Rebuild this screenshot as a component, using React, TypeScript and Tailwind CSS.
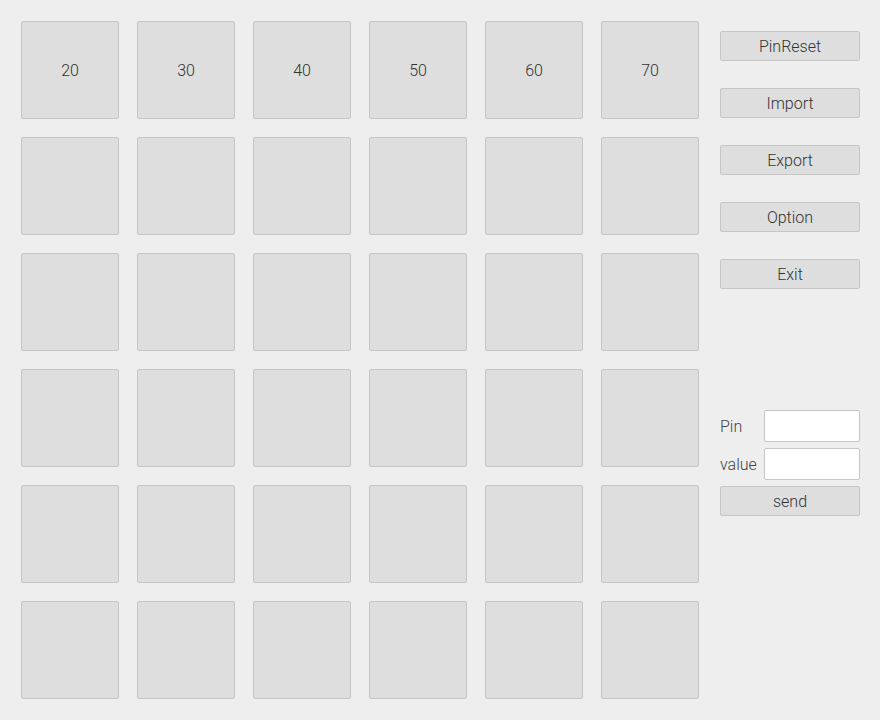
const labels = ["20", "30", "40", "50", "60", "70"];

function Tile({ label }: { label?: string }) {
  return (
    <div className="flex h-[98px] w-[98px] items-center justify-center rounded-[2px] border border-[#c6c6c6] bg-[#dedede] pt-[2px] text-[16px] font-light text-[#333333]">
      {label}
    </div>
  );
}

function Button({ children }: { children: string }) {
  return (
    <button className="flex h-[30px] w-[140px] items-center justify-center rounded-[2px] border border-[#c6c6c6] bg-[#dedede] pt-[2px] text-[16px] font-light text-[#333333]">
      {children}
    </button>
  );
}

export default function App() {
  const tiles = Array.from({ length: 36 }, (_, i) => (i < 6 ? labels[i] : undefined));

  return (
    <div
      className="flex h-[720px] w-[880px] bg-[#eeeeee] pl-[21px] pt-[21px]"
      style={{ fontFamily: "Roboto, 'Noto Sans', sans-serif" }}
    >
      <div className="grid grid-cols-[repeat(6,98px)] gap-[18px] self-start">
        {tiles.map((label, i) => (
          <Tile key={i} label={label} />
        ))}
      </div>

      <div className="ml-[21px] flex w-[140px] flex-col pt-[10px]">
        <div className="flex flex-col gap-[27px]">
          {["PinReset", "Import", "Export", "Option", "Exit"].map((b) => (
            <Button key={b}>{b}</Button>
          ))}
        </div>

        <div className="mt-[121px] flex flex-col gap-[6px]">
          <div className="flex items-center justify-between">
            <span className="pt-[2px] text-[16px] font-light text-[#444444]">Pin</span>
            <input className="h-[32px] w-[96px] rounded-[2px] border border-[#c6c6c6] bg-white outline-none" />
          </div>
          <div className="flex items-center justify-between">
            <span className="pt-[2px] text-[16px] font-light text-[#444444]">value</span>
            <input className="h-[32px] w-[96px] rounded-[2px] border border-[#c6c6c6] bg-white outline-none" />
          </div>
          <Button>send</Button>
        </div>
      </div>
    </div>
  );
}
